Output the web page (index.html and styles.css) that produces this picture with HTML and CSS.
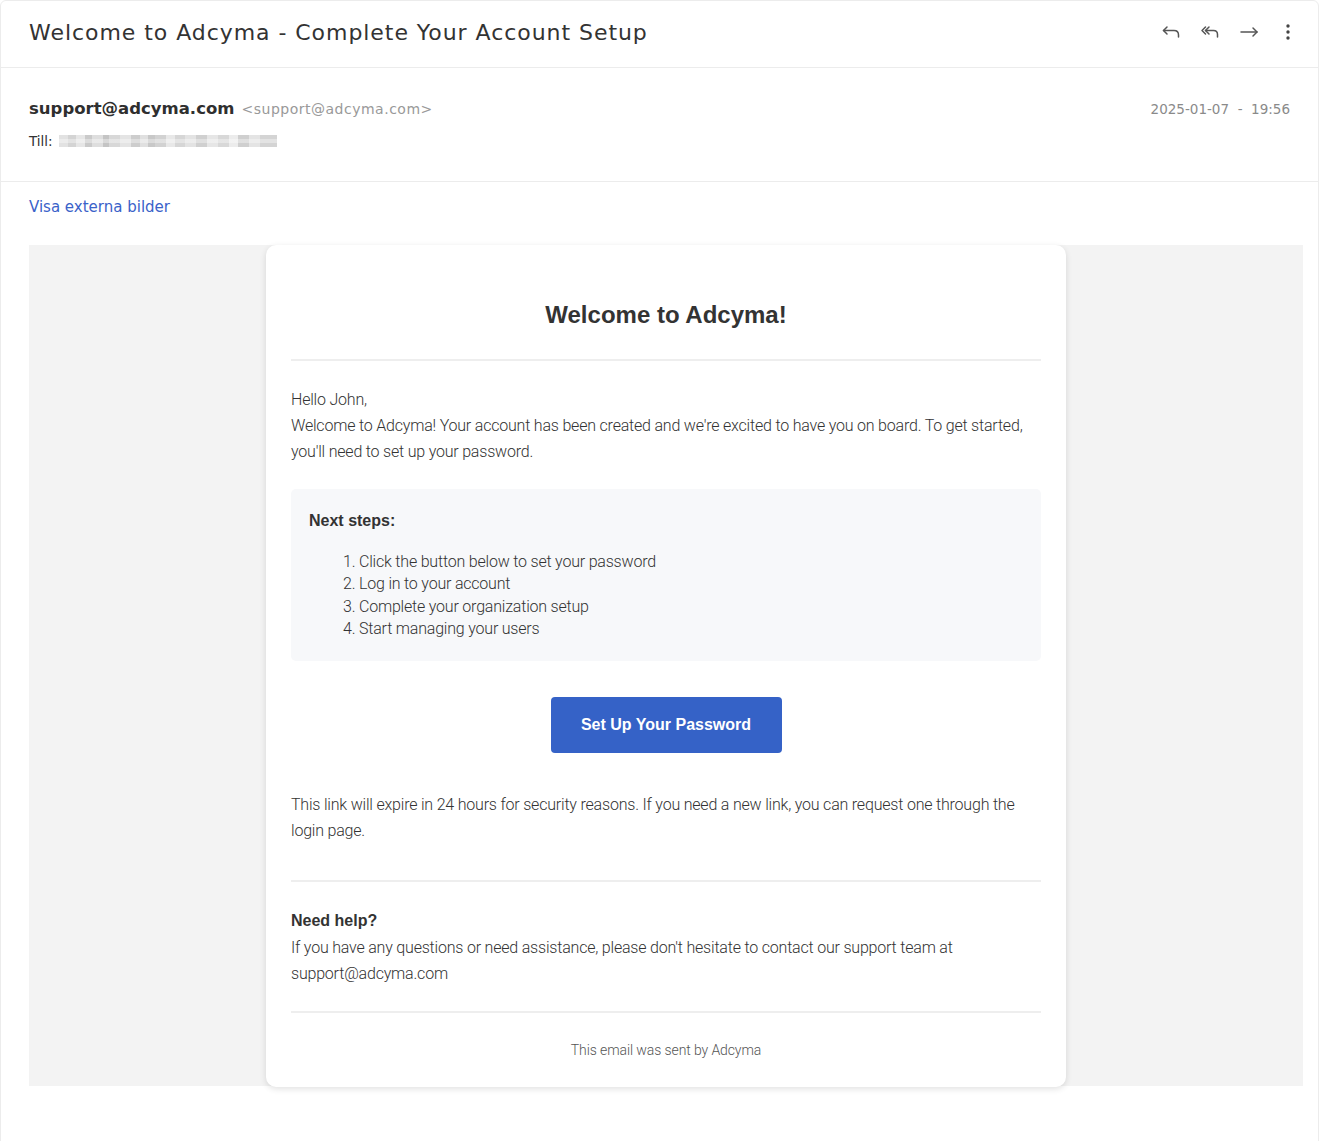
FILE: index.html
```html
<!DOCTYPE html>
<html lang="sv">
<head>
<meta charset="utf-8">
<title>Welcome to Adcyma - Complete Your Account Setup</title>
<link rel="stylesheet" href="styles.css">
</head>
<body>
<div class="mail">
  <header class="mail-head">
    <h1 class="subject">Welcome to Adcyma - Complete Your Account Setup</h1>
    <div class="actions">
      <button class="icon-btn" aria-label="Svara">
        <svg width="20" height="20" viewBox="0 0 20 20" fill="none" stroke="#555" stroke-width="1.5" stroke-linecap="round" stroke-linejoin="round"><path d="M6 5 L2.5 8.5 L6 12"/><path d="M2.5 8.5 H13 Q17.5 8.5 17.5 13 V15"/></svg>
      </button>
      <button class="icon-btn" aria-label="Svara alla">
        <svg width="20" height="20" viewBox="0 0 20 20" fill="none" stroke="#555" stroke-width="1.5" stroke-linecap="round" stroke-linejoin="round"><path d="M5.5 5 L2 8.5 L5.5 12"/><path d="M9 5 L5.5 8.5 L9 12"/><path d="M5.5 8.5 H13.5 Q17.5 8.5 17.5 12.5 V15"/></svg>
      </button>
      <button class="icon-btn" aria-label="Vidarebefordra">
        <svg width="20" height="20" viewBox="0 0 20 20" fill="none" stroke="#555" stroke-width="1.5" stroke-linecap="round" stroke-linejoin="round"><path d="M2 10 H18"/><path d="M14 6 L18 10 L14 14"/></svg>
      </button>
      <button class="icon-btn" aria-label="Mer">
        <svg width="20" height="20" viewBox="0 0 20 20" fill="#444"><circle cx="10" cy="4" r="1.7"/><circle cx="10" cy="10" r="1.7"/><circle cx="10" cy="16" r="1.7"/></svg>
      </button>
    </div>
  </header>

  <section class="sender">
    <div class="sender-main">
      <div class="from"><span class="from-name">support@adcyma.com</span> <span class="from-addr">&lt;support@adcyma.com&gt;</span></div>
      <div class="to">Till: <span class="blurred" aria-hidden="true"></span></div>
    </div>
    <div class="date">2025-01-07 &nbsp;-&nbsp; 19:56</div>
  </section>

  <div class="images-link"><a href="#">Visa externa bilder</a></div>

  <div class="mail-body">
    <div class="card">
      <h2 class="card-title">Welcome to Adcyma!</h2>
      <hr class="rule">
      <p class="text">Hello John,<br>Welcome to Adcyma! Your account has been created and we're excited to have you on board. To get started, you'll need to set up your password.</p>

      <div class="steps">
        <div class="steps-title">Next steps:</div>
        <ol class="steps-list">
          <li>Click the button below to set your password</li>
          <li>Log in to your account</li>
          <li>Complete your organization setup</li>
          <li>Start managing your users</li>
        </ol>
      </div>

      <div class="cta-row"><a href="#" class="cta">Set Up Your Password</a></div>

      <p class="text expire">This link will expire in 24 hours for security reasons. If you need a new link, you can request one through the login page.</p>

      <hr class="rule rule-help">
      <div class="help-title">Need help?</div>
      <p class="text help-text">If you have any questions or need assistance, please don't hesitate to contact our support team at support@adcyma.com</p>
      <hr class="rule rule-foot">
      <p class="foot">This email was sent by Adcyma</p>
    </div>
  </div>
</div>
</body>
</html>
```

FILE: styles.css
```css
* { box-sizing: border-box; }

html, body {
  margin: 0;
  padding: 0;
  background: #ffffff;
}

body {
  font-family: "DejaVu Sans", sans-serif;
  color: #333;
}

.mail {
  width: 1319px;
  min-height: 1160px;
  border: 1px solid #ececec;
  border-radius: 6px 6px 0 0;
  background: #fff;
}

.mail-head {
  height: 67px;
  border-bottom: 1px solid #ececec;
  display: flex;
  align-items: center;
  justify-content: space-between;
  padding: 0 20px 4px 28px;
}

.subject {
  margin: 0;
  font-family: "DejaVu Sans", sans-serif;
  font-weight: normal;
  font-size: 22px;
  letter-spacing: 0.95px;
  color: #333;
}

.actions {
  display: flex;
  gap: 19px;
  align-items: center;
}

.icon-btn {
  width: 20px;
  height: 20px;
  padding: 0;
  border: 0;
  background: none;
  display: flex;
}

.sender {
  display: flex;
  justify-content: space-between;
  padding: 29px 28px 30px 28px;
  border-bottom: 1px solid #ececec;
}

.from {
  line-height: 24px;
  white-space: nowrap;
}

.from-name {
  font-weight: bold;
  font-size: 16.5px;
  color: #2f2f2f;
}

.from-addr {
  font-size: 14px;
  letter-spacing: 0.5px;
  color: #999;
  margin-left: 2px;
}

.to {
  margin-top: 10px;
  line-height: 20px;
  font-size: 13.5px;
  color: #333;
  display: flex;
  align-items: center;
  gap: 6px;
}

.blurred {
  display: inline-block;
  width: 218px;
  height: 12px;
  background:
    linear-gradient(180deg, rgba(255,255,255,0) 0 33%, rgba(255,255,255,0.35) 33% 66%, rgba(255,255,255,0) 66%),
    linear-gradient(90deg,
      #e2e2e2 0 4%, #d4d4d4 4% 8%, #e6e6e6 8% 12%, #cacaca 12% 15%,
      #dedede 15% 20%, #c4c4c4 20% 23%, #d8d8d8 23% 28%, #e4e4e4 28% 33%,
      #cdcdcd 33% 37%, #e0e0e0 37% 41%, #c8c8c8 41% 44%, #d2d2d2 44% 49%,
      #e8e8e8 49% 53%, #d6d6d6 53% 58%, #e3e3e3 58% 63%, #d0d0d0 63% 68%,
      #e6e6e6 68% 73%, #d8d8d8 73% 78%, #ececec 78% 82%, #cfcfcf 82% 87%,
      #e4e4e4 87% 92%, #d4d4d4 92% 100%);
}

.date {
  font-size: 13.5px;
  color: #8a8a8a;
  line-height: 24px;
  white-space: nowrap;
}

.images-link {
  padding: 15px 28px 0;
  line-height: 20px;
  font-size: 15px;
}

.images-link a {
  color: #3a62c9;
  text-decoration: none;
}

.mail-body {
  margin: 28px 15px 0 28px;
  background: #f3f3f3;
  display: flex;
  justify-content: center;
}

.card {
  width: 800px;
  background: #fff;
  border-radius: 10px;
  box-shadow: 0 2px 6px rgba(0, 0, 0, 0.12);
  padding: 55px 25px 27px;
  margin-bottom: -1px;
  font-family: Roboto, "Liberation Sans", sans-serif;
}

.card-title {
  margin: 0;
  text-align: center;
  font-family: "Liberation Sans", Arial, sans-serif;
  font-weight: bold;
  font-size: 24px;
  line-height: 30px;
  color: #333;
}

.rule {
  border: 0;
  height: 2px;
  background: #eeeeee;
  margin: 29px 0 0;
}

.text {
  margin: 26px 0 0;
  font-size: 16px;
  font-weight: 300;
  line-height: 26px;
  letter-spacing: -0.2px;
  color: #333;
}

.steps {
  margin-top: 24px;
  background: #f7f8fa;
  border-radius: 5px;
  padding: 22px 18px 20px;
}

.steps-title {
  font-family: "Liberation Sans", Arial, sans-serif;
  font-weight: bold;
  font-size: 16px;
  line-height: 20px;
  color: #333;
}

.steps-list {
  margin: 20px 0 0;
  padding-left: 50px;
  font-size: 16px;
  font-weight: 300;
  line-height: 22.4px;
  letter-spacing: -0.2px;
  color: #333;
}

.cta-row {
  margin-top: 36px;
  display: flex;
  justify-content: center;
}

.cta {
  display: flex;
  align-items: center;
  justify-content: center;
  width: 231px;
  height: 56px;
  background: #3562c7;
  border-radius: 4px;
  color: #fff;
  text-decoration: none;
  font-family: "Liberation Sans", Arial, sans-serif;
  font-weight: bold;
  font-size: 16px;
}

.expire { margin-top: 39px; }

.rule-help { margin-top: 36px; }

.help-title {
  margin-top: 26px;
  font-family: "Liberation Sans", Arial, sans-serif;
  font-weight: bold;
  font-size: 16px;
  line-height: 26px;
  color: #333;
}

.help-text { margin-top: 1px; }

.rule-foot { margin-top: 24px; }

.foot {
  margin: 27px 0 0;
  text-align: center;
  font-size: 14px;
  font-weight: 300;
  line-height: 20px;
  letter-spacing: -0.1px;
  color: #555;
}
```
